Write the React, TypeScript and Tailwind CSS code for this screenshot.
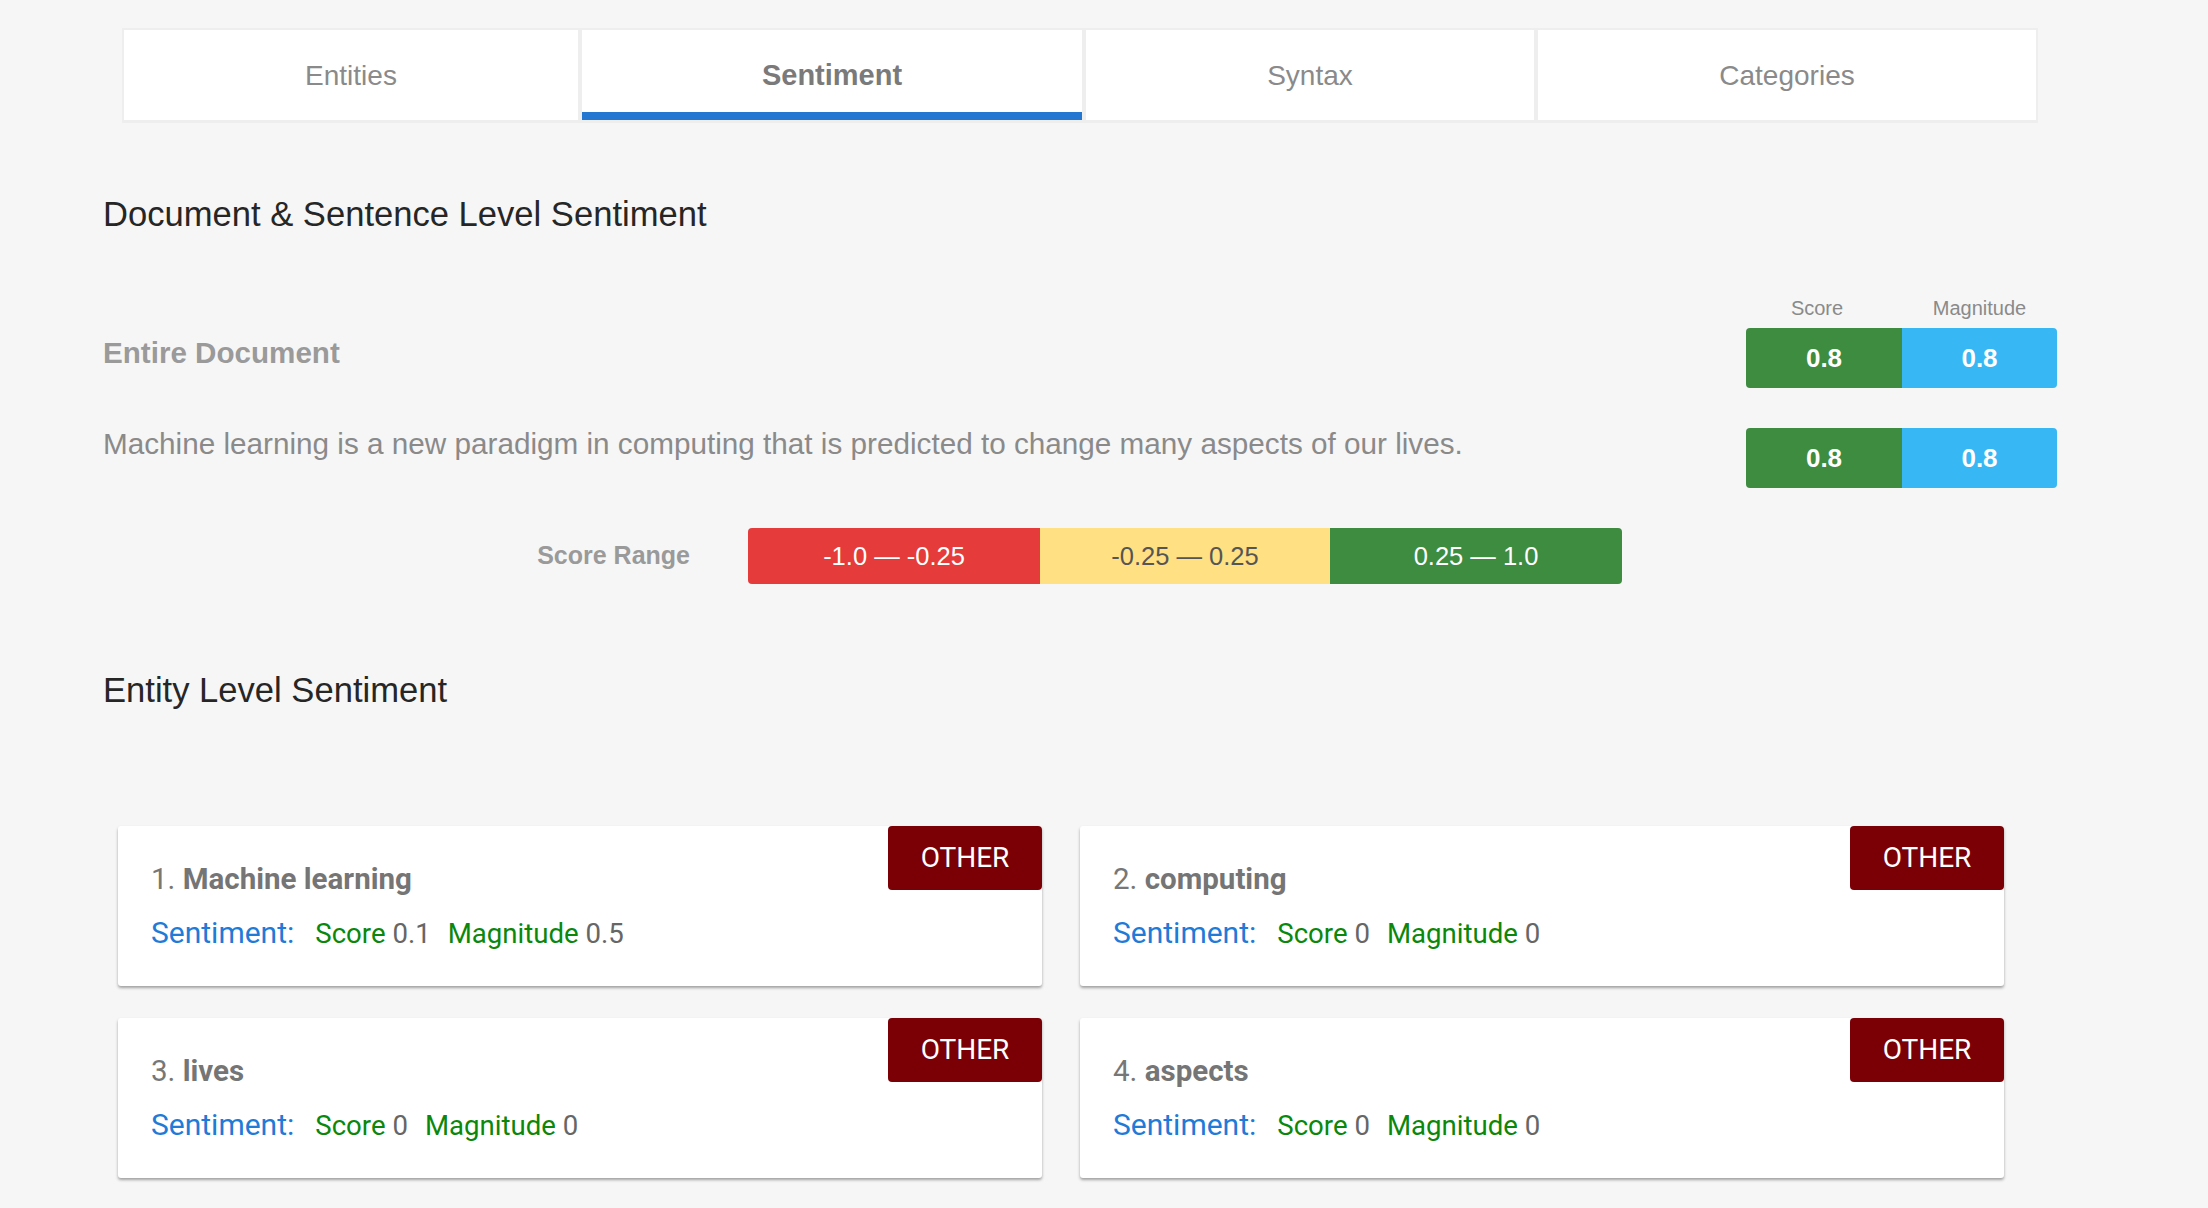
import React from 'react';

const tabs = [
  { label: 'Entities', w: 'w-[454px]' },
  { label: 'Sentiment', w: 'w-[500px]', active: true },
  { label: 'Syntax', w: 'w-[448px]' },
  { label: 'Categories', w: 'w-[498px]' },
];

const entities = [
  { n: 1, name: 'Machine learning', score: '0.1', magnitude: '0.5' },
  { n: 2, name: 'computing', score: '0', magnitude: '0' },
  { n: 3, name: 'lives', score: '0', magnitude: '0' },
  { n: 4, name: 'aspects', score: '0', magnitude: '0' },
];

function ScoreBadge({ score, magnitude }: { score: string; magnitude: string }) {
  return (
    <div className="flex h-[60px] w-[311px] shrink-0 overflow-hidden rounded-[4px] text-[26px] font-bold text-white">
      <div className="flex w-[156px] items-center justify-center bg-[#3d8c40]">{score}</div>
      <div className="flex flex-1 items-center justify-center bg-[#37b7f3]">{magnitude}</div>
    </div>
  );
}

function EntityCard({ n, name, score, magnitude }: (typeof entities)[number]) {
  return (
    <div className="relative h-[160px] rounded-[3px] bg-white pl-[33px] pt-[36px] font-['Roboto',sans-serif] shadow-[0_2px_3px_rgba(0,0,0,0.35)]">
      <div className="absolute right-0 top-0 flex h-[64px] w-[154px] items-center justify-center rounded-[4px] bg-[#7b0006] text-[28px] text-white">
        OTHER
      </div>
      <div className="text-[29.5px] leading-[34px] text-[#777]">
        {n}. <span className="font-bold text-[#757575]">{name}</span>
      </div>
      <div className="mt-[20px] flex items-baseline text-[27.6px] leading-[34px]">
        <span className="mr-[21px] text-[30px] text-[#1e7bd8]">Sentiment:</span>
        <span className="mr-[17px] text-[#0b870b]">
          Score <span className="text-[#666]">{score}</span>
        </span>
        <span className="text-[#0b870b]">
          Magnitude <span className="text-[#666]">{magnitude}</span>
        </span>
      </div>
    </div>
  );
}

export default function App() {
  return (
    <div className="min-h-screen bg-[#f6f6f6] pb-[30px] font-['Liberation_Sans',Arial,sans-serif]">
      {/* tabs */}
      <div className="pt-[28px] pl-[122px]">
        <div className="flex w-[1916px] gap-[4px] bg-[#eeeeee] px-[2px] pt-[2px] pb-[3px]">
          {tabs.map((t) => (
            <div
              key={t.label}
              className={`relative flex h-[90px] ${t.w} items-center justify-center bg-white pt-[2px] ${
                t.active ? 'text-[29px] font-bold text-[#7a7a7a]' : 'text-[28px] text-[#8a8a8a]'
              }`}
            >
              {t.label}
              {t.active && <div className="absolute bottom-0 left-0 right-0 h-[8px] bg-[#2477d0]" />}
            </div>
          ))}
        </div>
      </div>

      <div className="pl-[103px] pr-[151px]">
        <h2 className="mt-[71px] text-[34.6px] leading-[40px] text-[#262626]">Document &amp; Sentence Level Sentiment</h2>

        <div className="mt-[64px] flex justify-end">
          <div className="flex w-[311px] text-[20px] leading-[20px] text-[#8a8a8a]">
            <div className="w-[156px] pr-[14px] text-center">Score</div>
            <div className="flex-1 text-center">Magnitude</div>
          </div>
        </div>

        <div className="mt-[10px] flex items-start justify-between">
          <div className="mt-[9px] text-[29.6px] font-bold leading-[32px] text-[#9a9a9a]">Entire Document</div>
          <ScoreBadge score="0.8" magnitude="0.8" />
        </div>

        <div className="mt-[40px] flex items-start justify-between">
          <div className="whitespace-nowrap text-[29.7px] leading-[32px] text-[#8a8a8a]">
            Machine learning is a new paradigm in computing that is predicted to change many aspects of our lives.
          </div>
          <ScoreBadge score="0.8" magnitude="0.8" />
        </div>

        <div className="mt-[40px] flex items-center pl-[427px]">
          <div className="mr-[58px] w-[160px] whitespace-nowrap text-right text-[25px] font-bold text-[#9a9a9a]">Score Range</div>
          <div className="flex h-[56px] overflow-hidden rounded-[4px] text-[25.5px]">
            <div className="flex w-[292px] items-center justify-center bg-[#e53b3b] text-white">-1.0 — -0.25</div>
            <div className="flex w-[290px] items-center justify-center bg-[#ffe082] text-[#555]">-0.25 — 0.25</div>
            <div className="flex w-[292px] items-center justify-center bg-[#3d8c40] text-white">0.25 — 1.0</div>
          </div>
        </div>

        <h2 className="mt-[86px] text-[34.6px] leading-[40px] text-[#262626]">Entity Level Sentiment</h2>
      </div>

      <div className="mt-[116px] ml-[118px] grid w-[1886px] grid-cols-2 gap-x-[38px] gap-y-[32px]">
        {entities.map((e) => (
          <EntityCard key={e.n} {...e} />
        ))}
      </div>
    </div>
  );
}
